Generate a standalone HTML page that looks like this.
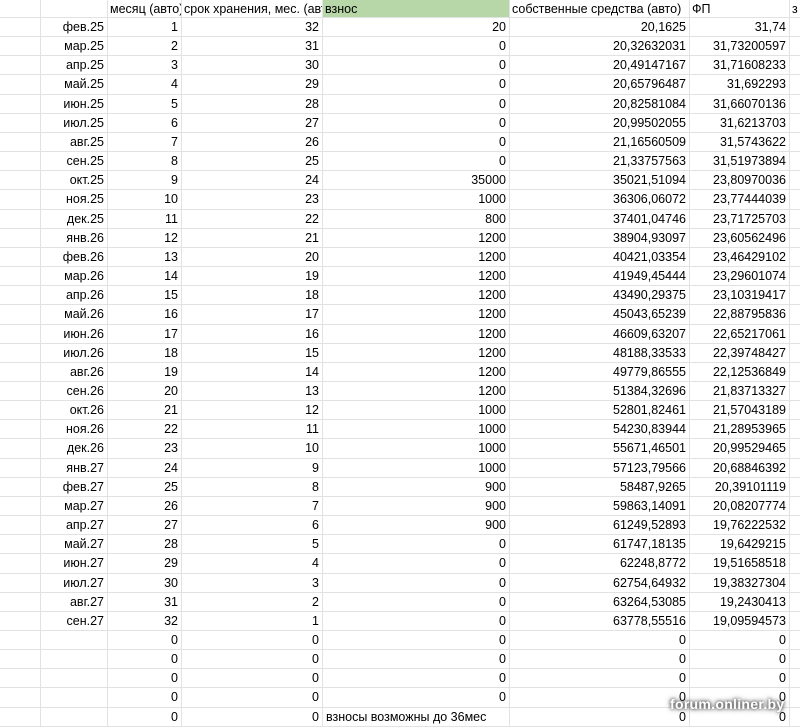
<!DOCTYPE html>
<html><head><meta charset="utf-8"><style>
body{margin:0;width:800px;height:728px;overflow:hidden;background:#fff;font-family:"Liberation Sans",Arial,sans-serif;font-size:12.5px;color:#000;position:relative}
.r{display:flex;height:19.16px;box-sizing:border-box;border-bottom:1px solid #e2e2e2}
.h{height:18px}
.r div{box-sizing:border-box;border-right:1px solid #e2e2e2;text-align:right;padding:0 3px;line-height:18px;white-space:nowrap;overflow:hidden}
.a{width:41px}.b{width:67px}.c{width:74px}.d{width:141px}.e{width:187px}.f{width:180px}.g{width:100px}.k{width:10px;border-right:none!important}
.h div{text-align:left;padding:0 2px}
.gr{background:#b7d7a8}
.l{text-align:left!important;overflow:visible!important}
.wm{position:absolute;left:670px;top:696px;color:#fff;font-weight:bold;font-size:14px;text-shadow:0 0 3px #333,0 0 6px #555;letter-spacing:0.3px}
</style></head><body>
<div class="r h"><div class="a"></div><div class="b"></div><div class="c">месяц (авто)</div><div class="d">срок хранения, мес. (авто</div><div class="e gr">взнос</div><div class="f">собственные средства (авто)</div><div class="g">ФП</div><div class="k">з</div></div>
<div class="r"><div class="a"></div><div class="b">фев.25</div><div class="c">1</div><div class="d">32</div><div class="e">20</div><div class="f">20,1625</div><div class="g">31,74</div><div class="k"></div></div>
<div class="r"><div class="a"></div><div class="b">мар.25</div><div class="c">2</div><div class="d">31</div><div class="e">0</div><div class="f">20,32632031</div><div class="g">31,73200597</div><div class="k"></div></div>
<div class="r"><div class="a"></div><div class="b">апр.25</div><div class="c">3</div><div class="d">30</div><div class="e">0</div><div class="f">20,49147167</div><div class="g">31,71608233</div><div class="k"></div></div>
<div class="r"><div class="a"></div><div class="b">май.25</div><div class="c">4</div><div class="d">29</div><div class="e">0</div><div class="f">20,65796487</div><div class="g">31,692293</div><div class="k"></div></div>
<div class="r"><div class="a"></div><div class="b">июн.25</div><div class="c">5</div><div class="d">28</div><div class="e">0</div><div class="f">20,82581084</div><div class="g">31,66070136</div><div class="k"></div></div>
<div class="r"><div class="a"></div><div class="b">июл.25</div><div class="c">6</div><div class="d">27</div><div class="e">0</div><div class="f">20,99502055</div><div class="g">31,6213703</div><div class="k"></div></div>
<div class="r"><div class="a"></div><div class="b">авг.25</div><div class="c">7</div><div class="d">26</div><div class="e">0</div><div class="f">21,16560509</div><div class="g">31,5743622</div><div class="k"></div></div>
<div class="r"><div class="a"></div><div class="b">сен.25</div><div class="c">8</div><div class="d">25</div><div class="e">0</div><div class="f">21,33757563</div><div class="g">31,51973894</div><div class="k"></div></div>
<div class="r"><div class="a"></div><div class="b">окт.25</div><div class="c">9</div><div class="d">24</div><div class="e">35000</div><div class="f">35021,51094</div><div class="g">23,80970036</div><div class="k"></div></div>
<div class="r"><div class="a"></div><div class="b">ноя.25</div><div class="c">10</div><div class="d">23</div><div class="e">1000</div><div class="f">36306,06072</div><div class="g">23,77444039</div><div class="k"></div></div>
<div class="r"><div class="a"></div><div class="b">дек.25</div><div class="c">11</div><div class="d">22</div><div class="e">800</div><div class="f">37401,04746</div><div class="g">23,71725703</div><div class="k"></div></div>
<div class="r"><div class="a"></div><div class="b">янв.26</div><div class="c">12</div><div class="d">21</div><div class="e">1200</div><div class="f">38904,93097</div><div class="g">23,60562496</div><div class="k"></div></div>
<div class="r"><div class="a"></div><div class="b">фев.26</div><div class="c">13</div><div class="d">20</div><div class="e">1200</div><div class="f">40421,03354</div><div class="g">23,46429102</div><div class="k"></div></div>
<div class="r"><div class="a"></div><div class="b">мар.26</div><div class="c">14</div><div class="d">19</div><div class="e">1200</div><div class="f">41949,45444</div><div class="g">23,29601074</div><div class="k"></div></div>
<div class="r"><div class="a"></div><div class="b">апр.26</div><div class="c">15</div><div class="d">18</div><div class="e">1200</div><div class="f">43490,29375</div><div class="g">23,10319417</div><div class="k"></div></div>
<div class="r"><div class="a"></div><div class="b">май.26</div><div class="c">16</div><div class="d">17</div><div class="e">1200</div><div class="f">45043,65239</div><div class="g">22,88795836</div><div class="k"></div></div>
<div class="r"><div class="a"></div><div class="b">июн.26</div><div class="c">17</div><div class="d">16</div><div class="e">1200</div><div class="f">46609,63207</div><div class="g">22,65217061</div><div class="k"></div></div>
<div class="r"><div class="a"></div><div class="b">июл.26</div><div class="c">18</div><div class="d">15</div><div class="e">1200</div><div class="f">48188,33533</div><div class="g">22,39748427</div><div class="k"></div></div>
<div class="r"><div class="a"></div><div class="b">авг.26</div><div class="c">19</div><div class="d">14</div><div class="e">1200</div><div class="f">49779,86555</div><div class="g">22,12536849</div><div class="k"></div></div>
<div class="r"><div class="a"></div><div class="b">сен.26</div><div class="c">20</div><div class="d">13</div><div class="e">1200</div><div class="f">51384,32696</div><div class="g">21,83713327</div><div class="k"></div></div>
<div class="r"><div class="a"></div><div class="b">окт.26</div><div class="c">21</div><div class="d">12</div><div class="e">1000</div><div class="f">52801,82461</div><div class="g">21,57043189</div><div class="k"></div></div>
<div class="r"><div class="a"></div><div class="b">ноя.26</div><div class="c">22</div><div class="d">11</div><div class="e">1000</div><div class="f">54230,83944</div><div class="g">21,28953965</div><div class="k"></div></div>
<div class="r"><div class="a"></div><div class="b">дек.26</div><div class="c">23</div><div class="d">10</div><div class="e">1000</div><div class="f">55671,46501</div><div class="g">20,99529465</div><div class="k"></div></div>
<div class="r"><div class="a"></div><div class="b">янв.27</div><div class="c">24</div><div class="d">9</div><div class="e">1000</div><div class="f">57123,79566</div><div class="g">20,68846392</div><div class="k"></div></div>
<div class="r"><div class="a"></div><div class="b">фев.27</div><div class="c">25</div><div class="d">8</div><div class="e">900</div><div class="f">58487,9265</div><div class="g">20,39101119</div><div class="k"></div></div>
<div class="r"><div class="a"></div><div class="b">мар.27</div><div class="c">26</div><div class="d">7</div><div class="e">900</div><div class="f">59863,14091</div><div class="g">20,08207774</div><div class="k"></div></div>
<div class="r"><div class="a"></div><div class="b">апр.27</div><div class="c">27</div><div class="d">6</div><div class="e">900</div><div class="f">61249,52893</div><div class="g">19,76222532</div><div class="k"></div></div>
<div class="r"><div class="a"></div><div class="b">май.27</div><div class="c">28</div><div class="d">5</div><div class="e">0</div><div class="f">61747,18135</div><div class="g">19,6429215</div><div class="k"></div></div>
<div class="r"><div class="a"></div><div class="b">июн.27</div><div class="c">29</div><div class="d">4</div><div class="e">0</div><div class="f">62248,8772</div><div class="g">19,51658518</div><div class="k"></div></div>
<div class="r"><div class="a"></div><div class="b">июл.27</div><div class="c">30</div><div class="d">3</div><div class="e">0</div><div class="f">62754,64932</div><div class="g">19,38327304</div><div class="k"></div></div>
<div class="r"><div class="a"></div><div class="b">авг.27</div><div class="c">31</div><div class="d">2</div><div class="e">0</div><div class="f">63264,53085</div><div class="g">19,2430413</div><div class="k"></div></div>
<div class="r"><div class="a"></div><div class="b">сен.27</div><div class="c">32</div><div class="d">1</div><div class="e">0</div><div class="f">63778,55516</div><div class="g">19,09594573</div><div class="k"></div></div>
<div class="r"><div class="a"></div><div class="b"></div><div class="c">0</div><div class="d">0</div><div class="e">0</div><div class="f">0</div><div class="g">0</div><div class="k"></div></div>
<div class="r"><div class="a"></div><div class="b"></div><div class="c">0</div><div class="d">0</div><div class="e">0</div><div class="f">0</div><div class="g">0</div><div class="k"></div></div>
<div class="r"><div class="a"></div><div class="b"></div><div class="c">0</div><div class="d">0</div><div class="e">0</div><div class="f">0</div><div class="g">0</div><div class="k"></div></div>
<div class="r"><div class="a"></div><div class="b"></div><div class="c">0</div><div class="d">0</div><div class="e">0</div><div class="f">0</div><div class="g">0</div><div class="k"></div></div>
<div class="r"><div class="a"></div><div class="b"></div><div class="c">0</div><div class="d">0</div><div class="e l">взносы возможны до 36мес</div><div class="f">0</div><div class="g">0</div><div class="k"></div></div>
<div class="wm">forum.onliner.by</div>
</body></html>
